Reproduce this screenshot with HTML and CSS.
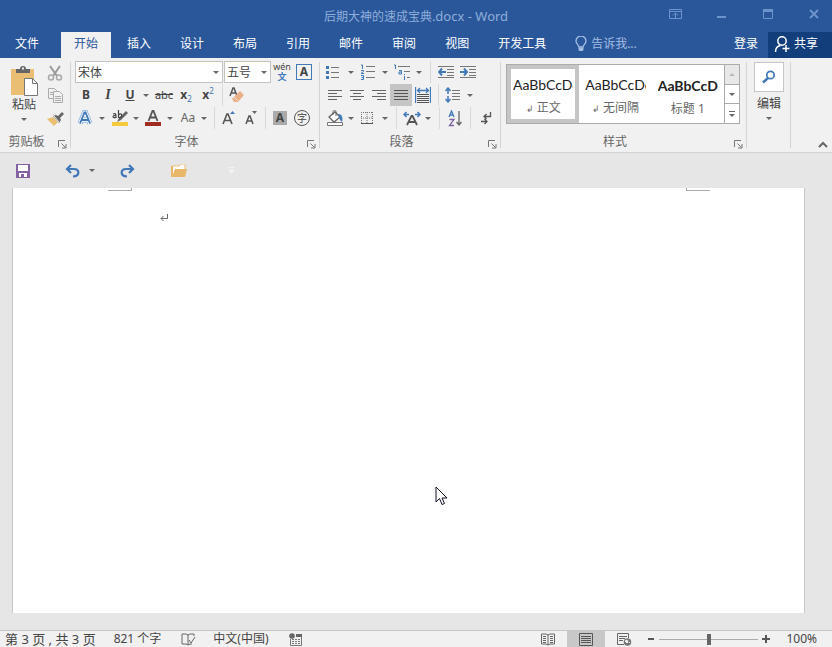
FILE: index.html
```html
<!DOCTYPE html>
<html lang="zh-CN">
<head>
  <meta charset="UTF-8">
  <meta name="viewport" content="width=device-width, initial-scale=1.0">
  <title>后期大神的速成宝典.docx - Word</title>
  <link rel="stylesheet" href="styles.css">
</head>
<body>
  <header class="top">
    <div class="title-bar">
      <h1>后期大神的速成宝典<span class="latin">.docx - Word</span></h1>
      <div class="window-buttons">
        <button title="功能区显示选项"><svg width="14" height="12" viewBox="0 0 14 12"><path d="M.5 1.5h12v9H.5zM.5 3.5h12M6.500 10V5M4 7.500l2.500-2.500L9 7.500" fill="none" stroke="currentColor"/></svg></button>
        <button title="最小化"><svg width="10" height="12" viewBox="0 0 10 12"><path d="M0 8h9v2H0z" fill="currentColor"/></svg></button>
        <button title="最大化"><svg width="12" height="12" viewBox="0 0 12 12"><path d="M1.500 1.500h9v9h-9z" fill="none" stroke="currentColor"/><path d="M1 1h10v3H1z" fill="currentColor"/></svg></button>
        <button title="关闭"><svg width="12" height="12" viewBox="0 0 12 12"><path d="M2 2l8 8M10 2l-8 8" stroke="currentColor" stroke-width="2"/></svg></button>
      </div>
    </div>
    <nav class="tabs">
      <button class="file">文件</button>
      <button class="active">开始</button>
      <button>插入</button>
      <button>设计</button>
      <button>布局</button>
      <button>引用</button>
      <button>邮件</button>
      <button>审阅</button>
      <button>视图</button>
      <button>开发工具</button>
      <button class="tell-me"><svg width="12" height="16" viewBox="0 0 12 16"><path d="M4 11c0-2-3-3-3-6a5 5 0 0 1 10 0c0 3-3 4-3 6z" fill="none" stroke="currentColor" stroke-width="1.300"/><path d="M3.500 11.500h5V14l-1 1h-3l-1-1z" fill="currentColor"/></svg>告诉我...</button>
      <button class="login">登录</button>
      <button class="share"><svg width="16" height="18" viewBox="0 0 16 18"><circle cx="8" cy="6" r="4.200" fill="none" stroke="currentColor" stroke-width="1.500"/><path d="M1.500 17c0-4 2-6 5-6.500M8.500 13.500h7M12 10v7" fill="none" stroke="currentColor" stroke-width="1.500"/></svg>共享</button>
    </nav>
  </header>

  <section class="ribbon">
    <div class="group clipboard">
      <div class="tools">
        <button class="paste">
          <svg width="30" height="31" viewBox="0 0 30 31"><path d="M2 4h23v26H2z" fill="#eabf74"/><path d="M7 8V4h4a3 3 0 0 1 6 0h4v4z" fill="#666"/><path d="M13 2.500h2v2h-2z" fill="#f1f1f1"/><path d="M15.500 13.500h8l5 5v12h-13z" fill="#fff" stroke="#777"/><path d="M23.500 13.500v5h5" fill="none" stroke="#777"/></svg>
          <span>粘贴</span>
          <i class="caret"></i>
        </button>
        <div class="side">
          <button title="剪切"><svg width="16" height="16" viewBox="0 0 16 16"><path d="M3 1l7 10M13 1L6 11" stroke="#999" stroke-width="2"/><circle cx="4" cy="12.500" r="2.500" fill="none" stroke="#aaa" stroke-width="1.500"/><circle cx="12" cy="12.500" r="2.500" fill="none" stroke="#aaa" stroke-width="1.500"/></svg></button>
          <button title="复制"><svg width="16" height="15" viewBox="0 0 16 15"><g fill="#f1f1f1" stroke="#aaa"><path d="M1.500.5h6l2 2v8h-8z"/><path d="M3 4.500h4M3 6.500h3"/><path d="M6.500 3.500h6l3 3v8h-9z"/><path d="M8 8.500h6M8 10.500h6M8 12.500h6"/></g></svg></button>
          <button title="格式刷"><svg width="17" height="14" viewBox="0 0 17 14"><path d="M0 7l6-2 5 5-4 4z" fill="#eabf74"/><path d="M6 4l3-1 2 1 4-4 2 2-4 4 1 2-2 3z" fill="#666"/><path d="M7 4l5 6" stroke="#f1f1f1"/></svg></button>
        </div>
      </div>
      <footer>剪贴板<button class="launcher" title="剪贴板"><svg width="9" height="9" viewBox="0 0 9 9"><path d="M.5 7V.5H7M3.500 3.500l4 4M8 4v4H4" fill="none" stroke="#777"/></svg></button></footer>
    </div>

    <div class="group font">
      <div class="row">
        <label class="combo family"><select aria-label="字体"><option>宋体</option></select><i class="caret"></i></label>
        <label class="combo size"><select aria-label="字号"><option>五号</option></select><i class="caret"></i></label>
        <button class="wen" title="拼音指南"><span>wén</span><b>文</b></button>
        <button title="字符边框"><b class="box-a">A</b></button>
      </div>
      <div class="row">
        <button title="加粗"><b>B</b></button>
        <button title="倾斜"><em>I</em></button>
        <button class="drop" title="下划线"><u>U</u><i class="caret"></i></button>
        <button title="删除线"><s>abc</s></button>
        <button class="script" title="下标"><b>x</b><sub>2</sub></button>
        <button class="script" title="上标"><b>x</b><sup>2</sup></button>
        <span class="sep"></span>
        <button title="清除格式"><svg width="16" height="16" viewBox="0 0 16 16"><path d="M1 9l3-8h1l3 8M2.500 6h4" fill="none" stroke="#555" stroke-width="1.500"/><path d="M11 4l4 4-6 7H5l-2-3z" fill="#eab088"/><path d="M5 10l4 4" stroke="#f7dcc8"/></svg></button>
      </div>
      <div class="row">
        <button class="drop" title="文本效果"><svg width="16" height="16" viewBox="0 0 16 16"><path d="M3 13.500L7.500 2.500h1l4.500 11M5 10h6" fill="none" stroke="#7fa9dc" stroke-width="5"/><path d="M3 13.500L7.500 2.500h1l4.500 11M5 10h6" fill="none" stroke="#fff" stroke-width="3.500"/><path d="M3 13.500L7.500 2.500h1l4.500 11M5 10h6" fill="none" stroke="#4178b8" stroke-width="1.800"/></svg><i class="caret"></i></button>
        <button class="drop" title="突出显示"><svg width="18" height="18" viewBox="0 0 18 18"><path d="M1 13h16v4H1z" fill="#f5cb3c"/><path d="M8 9l7-7 2 2-7 7-4 2z" fill="#666"/><path d="M2 5c3-1 3 0 3 4M5 6.500c-4-.5-4 3 0 2M7.500 1v8M7.500 6c2-2 4-1 3 1s-2 2-3 1" fill="none" stroke="#444" stroke-width="1.200"/></svg><i class="caret"></i></button>
        <button class="drop" title="字体颜色"><svg width="16" height="18" viewBox="0 0 16 18"><path d="M0 13h16v4H0z" fill="#a12c21"/><path d="M3.500 12L7.500 2h1l4 10M5 8.500h6" fill="none" stroke="#555" stroke-width="1.800"/></svg><i class="caret"></i></button>
        <button class="drop case" title="更改大小写"><span>Aa</span><i class="caret"></i></button>
        <span class="sep"></span>
        <button title="增大字号"><svg width="14" height="16" viewBox="0 0 14 16"><path d="M1 14L5 4h1l4 10M2.500 10.500h6" fill="none" stroke="#555" stroke-width="1.600"/><path d="M8 4l2.500-3L13 4z" fill="#4178b8"/></svg></button>
        <button title="减小字号"><svg width="14" height="16" viewBox="0 0 14 16"><path d="M2 14l3-8h1l3 8M3 11h5" fill="none" stroke="#555" stroke-width="1.500"/><path d="M8 1l2.500 3L13 1z" fill="#666"/></svg></button>
        <span class="sep"></span>
        <button title="字符底纹"><b class="shade-a">A</b></button>
        <button title="带圈字符"><span class="ring">字</span></button>
      </div>
      <footer>字体<button class="launcher" title="字体"><svg width="9" height="9" viewBox="0 0 9 9"><path d="M.5 7V.5H7M3.500 3.500l4 4M8 4v4H4" fill="none" stroke="#777"/></svg></button></footer>
    </div>

    <div class="group paragraph">
      <div class="row">
        <button class="drop" title="项目符号"><svg width="15" height="15" viewBox="0 0 15 15"><path d="M0 1h3v3H0zM0 6h3v3H0zM0 11h3v3H0z" fill="#4178b8"/><path d="M5 2.500h8M5 7.500h8M5 12.500h8" stroke="#777"/></svg><i class="caret"></i></button>
        <button class="drop" title="编号"><svg width="17" height="16" viewBox="0 0 17 16"><path d="M1 1h1.500v4M1 6.500h2.500v1L1 9.500h3M1 11.500h2.500v4H1M1.500 13.500h2" fill="none" stroke="#4178b8"/><path d="M6 2.500h9M6 7.500h9M6 13.500h9" stroke="#777"/></svg><i class="caret"></i></button>
        <button class="drop" title="多级列表"><svg width="17" height="16" viewBox="0 0 17 16"><path d="M0 1h1.500v4M5 6.500h2.500v3.500H5V8h2M10.500 10v1M10.500 12v4" fill="none" stroke="#4178b8"/><path d="M4 2.500h12M10 7.500h6M13 13.500h3" stroke="#777"/></svg><i class="caret"></i></button>
        <span class="sep"></span>
        <button title="减少缩进量"><svg width="17" height="14" viewBox="0 0 17 14"><path d="M0 1.500h16M9 4.500h7M9 7.500h7M9 10.500h7M0 12.500h16" stroke="#777"/><path d="M1 7h7M4 3.500L1 7l3 3.500" fill="none" stroke="#4178b8" stroke-width="2"/></svg></button>
        <button title="增加缩进量"><svg width="17" height="14" viewBox="0 0 17 14"><path d="M0 1.500h16M9 4.500h7M9 7.500h7M9 10.500h7M0 12.500h16" stroke="#777"/><path d="M0 7h7M4 3.500L7 7l-3 3.500" fill="none" stroke="#4178b8" stroke-width="2"/></svg></button>
      </div>
      <div class="row">
        <button title="左对齐"><svg width="14" height="12" viewBox="0 0 14 12"><path d="M0 1.500h14M0 4.500h9M0 7.500h14M0 10.500h9" stroke="#666"/></svg></button>
        <button title="居中"><svg width="14" height="12" viewBox="0 0 14 12"><path d="M0 1.500h14M3 4.500h8M0 7.500h14M3 10.500h8" stroke="#666"/></svg></button>
        <button title="右对齐"><svg width="14" height="12" viewBox="0 0 14 12"><path d="M0 1.500h14M5 4.500h9M0 7.500h14M5 10.500h9" stroke="#666"/></svg></button>
        <button class="on" title="两端对齐"><svg width="14" height="12" viewBox="0 0 14 12"><path d="M0 1.500h14M0 4.500h14M0 7.500h14M0 10.500h14" stroke="#555"/></svg></button>
        <button title="分散对齐"><svg width="16" height="16" viewBox="0 0 16 16"><path d="M.5 0v16M15.500 0v16M3 3.500h10M5 1L2.500 3.500 5 6M11 1l2.500 2.500L11 6" fill="none" stroke="#4178b8" stroke-width="1.300"/><path d="M2 7.500h12M2 9.500h12M2 11.500h12M2 13.500h12M2 15.500h12" stroke="#555"/></svg></button>
        <span class="sep"></span>
        <button class="drop" title="行距"><svg width="15" height="16" viewBox="0 0 15 16"><path d="M3 1v14M.5 4L3 1l2.500 3M.5 12L3 15l2.500-3" fill="none" stroke="#4178b8" stroke-width="1.500"/><path d="M3 7v2" stroke="#f1f1f1" stroke-width="2"/><path d="M7 3.500h8M7 6.500h8M7 9.500h8M7 12.500h8" stroke="#777"/></svg><i class="caret"></i></button>
      </div>
      <div class="row">
        <button class="drop" title="底纹"><svg width="18" height="17" viewBox="0 0 18 17"><path d="M1.500 12.500h15v3h-15z" fill="#fff" stroke="#777"/><path d="M3 7l6-5 5 5-6 5z" fill="#fff" stroke="#666" stroke-width="1.300"/><path d="M7 5V2c0-2 3-2 3 0v4" fill="none" stroke="#666"/><path d="M12 4c4 0 5 3 4 8l-2-2z" fill="#4178b8"/></svg><i class="caret"></i></button>
        <button class="drop" title="边框"><svg width="16" height="14" viewBox="0 0 16 14"><path d="M1.500 1v12M7 1v12M12.500 1v12M1 1.500h12M1 7h12" fill="none" stroke="#777" stroke-dasharray="1 1"/><path d="M1 12.500h12" stroke="#555"/></svg><i class="caret"></i></button>
        <span class="sep"></span>
        <button class="drop" title="中文版式"><svg width="18" height="15" viewBox="0 0 18 15"><path d="M4 14L8.500 5h1L14 14M6 11h6" fill="none" stroke="#555" stroke-width="1.800"/><path d="M1 3.500h5M3.500 1L1 3.500 3.500 6M12 3.500h5M14.500 1L17 3.500 14.500 6" fill="none" stroke="#4178b8" stroke-width="1.500"/></svg><i class="caret"></i></button>
        <span class="sep"></span>
        <button title="排序"><svg width="15" height="17" viewBox="0 0 15 17"><path d="M1 7l2.500-6L6 7M2 5h3" fill="none" stroke="#4178b8" stroke-width="1.300"/><path d="M1.500 9.500H6L1.500 15.500H6" fill="none" stroke="#8064a2" stroke-width="1.300"/><path d="M11 1v14M8.500 12l2.500 3 2.500-3" fill="none" stroke="#666" stroke-width="1.300"/></svg></button>
        <span class="sep"></span>
        <button title="显示编辑标记"><svg width="12" height="14" viewBox="0 0 12 14"><path d="M10.500 1v4.500H4M6.500 3L4 5.500 6.500 8M7 10.500H1M4.500 8L7 10.500 4.500 13" fill="none" stroke="#555" stroke-width="1.300"/></svg></button>
      </div>
      <footer>段落<button class="launcher" title="段落"><svg width="9" height="9" viewBox="0 0 9 9"><path d="M.5 7V.5H7M3.500 3.500l4 4M8 4v4H4" fill="none" stroke="#777"/></svg></button></footer>
    </div>

    <div class="group styles">
      <div class="gallery">
        <button class="style selected"><span class="sample">AaBbCcDd</span><span><small>↲</small> 正文</span></button>
        <button class="style"><span class="sample">AaBbCcDd</span><span><small>↲</small> 无间隔</span></button>
        <button class="style"><span class="sample heading">AaBbCcDd</span><span>标题 1</span></button>
        <div class="scroller">
          <button class="off" title="上一行"><i class="caret up"></i></button>
          <button title="下一行"><i class="caret"></i></button>
          <button title="其他"><i class="line"></i><i class="caret"></i></button>
        </div>
      </div>
      <footer>样式<button class="launcher" title="样式"><svg width="9" height="9" viewBox="0 0 9 9"><path d="M.5 7V.5H7M3.500 3.500l4 4M8 4v4H4" fill="none" stroke="#777"/></svg></button></footer>
    </div>

    <div class="group editing">
      <button class="edit">
        <span class="frame"><svg width="14" height="14" viewBox="0 0 14 14"><circle cx="8.500" cy="5" r="3.700" fill="none" stroke="#4178b8" stroke-width="1.700"/><path d="M6 8l-5 4.500" stroke="#4178b8" stroke-width="2.500"/></svg></span>
        <span>编辑</span>
        <i class="caret"></i>
      </button>
    </div>
    <button class="collapse" title="折叠功能区"><svg width="10" height="7" viewBox="0 0 10 7"><path d="M1 6l4-4 4 4" fill="none" stroke="#666" stroke-width="2"/></svg></button>
  </section>

  <div class="quick-access">
    <button title="保存"><svg width="14" height="14" viewBox="0 0 14 14"><path d="M0 0h14v14H0z" fill="#8461a5"/><path d="M2 1h10v6H2zM3 9h8v4H3z" fill="#fff"/><path d="M5 10h3v3H5z" fill="#8461a5"/></svg></button>
    <button class="undo" title="撤消"><svg width="16" height="14" viewBox="0 0 16 14"><path d="M2 5h7c6 0 6 7-1 7.500M6 1L2 5l4 4" fill="none" stroke="#4178b8" stroke-width="2.200"/></svg><i class="caret"></i></button>
    <button class="redo" title="恢复"><svg width="16" height="14" viewBox="0 0 16 14"><path d="M14 5H7c-6 0-6 7 1 7.500M10 1l4 4-4 4" fill="none" stroke="#4178b8" stroke-width="2.200"/></svg></button>
    <button class="open" title="打开"><svg width="17" height="14" viewBox="0 0 17 14"><path d="M1 2h7l2-2h4v11H1z" fill="#fff" stroke="#eabf74"/><path d="M4 5h12l-2 8H1z" fill="#e8b868"/><path d="M0 2h2v11H0z" fill="#e8b868"/></svg></button>
    <button class="customize" title="自定义快速访问工具栏"><svg width="7" height="7" viewBox="0 0 7 7"><path d="M1 .5h5M1 3h5L3.500 6z" fill="#f3f3f3" stroke="#f3f3f3"/></svg></button>
  </div>

  <main class="workspace">
    <article class="page">
      <div class="crop-marks"><span class="left"></span><span class="right"></span></div>
      <p><svg width="8" height="8" viewBox="0 0 8 8"><path d="M7.500 0v4.500H1M3.500 2L1 4.500 3.500 7" fill="none" stroke="#666"/></svg></p>
      <svg class="pointer" width="13" height="20" viewBox="0 0 13 20"><path d="M1 1v15l3.500-3.500L7 18.500l2.500-1L7 12h5z" fill="#fff" stroke="#112"/></svg>
    </article>
  </main>

  <footer class="status">
    <span class="pages">第 3 页 , 共 3 页</span>
    <span class="words">821 个字</span>
    <button class="proof" title="校对"><svg width="15" height="13" viewBox="0 0 15 13"><path d="M7 2L5 1H1v10h4l2 1V2l2-1h4v2M7 12l2-1h2M8 7l2 3 4-6" fill="none" stroke="#666"/></svg></button>
    <span class="lang">中文(中国)</span>
    <button title="宏"><svg width="13" height="13" viewBox="0 0 13 13"><path d="M1.500 6v6.500h11v-9" fill="none" stroke="#777"/><path d="M7 1h6v3H7z" fill="#666"/><circle cx="3" cy="3" r="2.800" fill="#666"/><path d="M3 6.500h8M3 8.500h8M3 10.500h8" stroke="#777" stroke-dasharray="2 1"/></svg></button>
    <div class="views">
      <button title="阅读视图"><svg width="14" height="13" viewBox="0 0 14 13"><path d="M7 2L5 1H.5v10H5l2 1 2-1h4.500V1H9L7 2zv10M2 3.500h3M2 5.500h3M2 7.500h3M2 9.500h3M9 3.500h3M9 5.500h3M9 7.500h3M9 9.500h3" fill="none" stroke="#666"/></svg></button>
      <button class="on" title="页面视图"><svg width="14" height="13" viewBox="0 0 14 13"><path d="M.5.500h13v12H.5zM2 3.500h10M2 5.500h10M2 7.500h10M2 9.500h10" fill="none" stroke="#555"/></svg></button>
      <button title="Web 版式视图"><svg width="15" height="13" viewBox="0 0 15 13"><path d="M7 11.500H.5V.5h11V5M2 3.500h8M2 5.500h6M2 7.500h4" fill="none" stroke="#666"/><circle cx="10.500" cy="9" r="3.800" fill="#777"/><path d="M8 8l2-1 1 2-1 1zM12 10l1-1" fill="#fff" stroke="#eee"/></svg></button>
    </div>
    <button class="zoom-step" title="缩小"><svg width="8" height="8" viewBox="0 0 8 8"><path d="M1 3h6v2H1z" fill="#555"/></svg></button>
    <input type="range" min="0" max="100" value="50" aria-label="缩放">
    <button class="zoom-step" title="放大"><svg width="8" height="8" viewBox="0 0 8 8"><path d="M0 3h3V0h2v3h3v2H5v3H3V5H0z" fill="#555"/></svg></button>
    <span class="percent">100%</span>
  </footer>
</body>
</html>
```
FILE: styles.css
```css
* {
  box-sizing: border-box;
}

body {
  margin: 0;
  min-height: 100vh;
  display: flex;
  flex-direction: column;
  font: 12px/16px "Noto Sans", "Noto Sans CJK SC", sans-serif;
  color: #444;
  background: #e6e6e6;
}

button {
  display: flex;
  align-items: center;
  justify-content: center;
  padding: 0;
  border: 0;
  background: none;
  font: inherit;
  color: inherit;
  white-space: nowrap;
}

svg {
  display: block;
  flex: none;
}

.caret {
  flex: none;
  width: 0;
  height: 0;
  border: 3px solid transparent;
  border-top-color: #666;
  border-bottom: 0;
}

.caret.up {
  border-top: 0;
  border-bottom: 3px solid #bbb;
}

/* title bar and tabs */
.top {
  background: #2a579a;
  color: #fff;
}

.title-bar {
  position: relative;
  height: 32px;
  display: flex;
  align-items: center;
  justify-content: center;
}

.title-bar h1 {
  margin: 0;
  font-size: 12px;
  font-weight: normal;
  color: #8eaedb;
}

.title-bar .latin {
  font-size: 13px;
}

.window-buttons {
  position: absolute;
  top: 0;
  right: 0;
  display: flex;
  color: #6c93cb;
}

.window-buttons button {
  width: 46px;
  height: 28px;
}

.tabs {
  display: flex;
  height: 26px;
  gap: 3px;
  padding-left: 2px;
}

.tabs button {
  padding: 0 13px 2px;
}

.tabs .file {
  margin-right: 6px;
}

.tabs .active {
  background: #f1f1f1;
  color: #2a579a;
}

.tabs .tell-me {
  gap: 4px;
  color: #a3bde3;
}

.tabs .login {
  margin-left: auto;
  padding: 0 7px 2px;
}

.tabs .share {
  gap: 4px;
  padding: 0 14px 2px 6px;
  background: #123f7b;
}

.window-buttons button:last-child {
  width: 36px;
}

.window-buttons button:nth-last-child(2) {
  margin-right: 5px;
}

/* ribbon */
.ribbon {
  display: flex;
  height: 95px;
  background: #f1f1f1;
  border-bottom: 1px solid #d2d2d2;
}

.group {
  position: relative;
  display: flex;
  flex-direction: column;
  padding: 3px 4px 0;
}

.group::after {
  content: "";
  position: absolute;
  top: 4px;
  right: 0;
  bottom: 4px;
  width: 1px;
  background: #d4d4d4;
}

.group > footer {
  position: relative;
  margin-top: auto;
  height: 18px;
  padding-right: 18px;
  text-align: center;
  color: #666;
}

.launcher {
  position: absolute;
  right: 0;
  top: 6px;
}

.clipboard {
  width: 71px;
}

.clipboard .tools {
  display: flex;
  justify-content: space-between;
}

.paste {
  flex-direction: column;
  align-self: flex-start;
  width: 38px;
  padding: 4px 0 0 2px;
}

.paste span {
  margin: 1px 0 5px;
}

.side button {
  width: 20px;
  height: 23px;
}

.side {
  margin-right: 2px;
}

.font {
  width: 249px;
}

.paragraph {
  width: 181px;
}

.styles {
  width: 246px;
}

.editing {
  width: 44px;
}

.row {
  display: flex;
  align-items: center;
  height: 22px;
  margin-bottom: 1px;
}

.row button {
  width: 22px;
  height: 22px;
}

.row .drop {
  width: 30px;
  margin-right: 4px;
}

.row .drop > span,
.row .drop > u {
  width: 22px;
  text-align: center;
}

.row .drop {
  justify-content: space-between;
}

.row .drop > svg {
  margin: 0 2px;
}

.row .on {
  background: #c5c5c5;
}

.sep {
  width: 1px;
  height: 22px;
  margin: 0 3px;
  background: #dadada;
}

.paragraph .sep {
  margin: 0 4px;
}

.combo {
  position: relative;
  display: flex;
  height: 22px;
}

.combo select {
  width: 100%;
  padding: 1px 2px 0;
  border: 1px solid #c3c3c3;
  border-radius: 0;
  appearance: none;
  background: #fff;
  font: inherit;
  color: #444;
}

.combo .caret {
  position: absolute;
  right: 4px;
  top: 10px;
}

.family {
  width: 148px;
  margin-right: 1px;
}

.size {
  width: 47px;
}

.row .wen {
  flex-direction: column;
  font-size: 9px;
  line-height: 8px;
  gap: 2px;
}

.wen b {
  color: #4178b8;
}

.box-a {
  width: 16px;
  height: 16px;
  border: 1px solid #4178b8;
  line-height: 14px;
}

.shade-a {
  width: 14px;
  height: 14px;
  background: #aaa;
  line-height: 14px;
}

.ring {
  width: 16px;
  height: 16px;
  border: 1px solid #555;
  border-radius: 50%;
  font-size: 10px;
  line-height: 14px;
}

.row s {
  font-size: 11px;
}

.row em,
.row u {
  font-weight: bold;
}

.row em {
  font-family: "Liberation Serif", serif;
  font-size: 14px;
}

.script sub,
.script sup {
  font-size: 8px;
  line-height: 8px;
  color: #4178b8;
}

.script sub {
  align-self: flex-end;
  margin-bottom: 3px;
}

.script sup {
  align-self: flex-start;
  margin-top: 3px;
}

.case {
  color: #666;
}

/* style gallery */
.gallery {
  display: flex;
  height: 60px;
  margin: 3px 3px 0 1px;
  border: 1px solid #ababab;
  background: #fff;
}

.style {
  flex: 1;
  flex-direction: column;
  min-width: 0;
  padding: 6px 6px 0;
  color: #666;
}

.style.selected {
  padding: 6px 2px 0;
  border: 4px solid #c5c5c5;
}

.style .sample {
  width: 100%;
  margin-bottom: 7px;
  overflow: hidden;
  text-align: left;
  font-family: Lato, sans-serif;
  font-size: 14px;
  color: #222;
}

.style .heading {
  font-weight: bold;
}

.style small {
  font-size: 9px;
}

.scroller {
  display: flex;
  flex-direction: column;
  width: 15px;
  border-left: 1px solid #ababab;
}

.scroller button {
  flex: 1;
  flex-direction: column;
  gap: 2px;
}

.scroller button + button {
  border-top: 1px solid #ababab;
}

.scroller .off {
  background: #e8e8e8;
}

.scroller .line {
  width: 6px;
  height: 1px;
  background: #666;
}

.edit {
  flex-direction: column;
}

.edit .frame {
  display: flex;
  align-items: center;
  justify-content: center;
  width: 30px;
  height: 30px;
  margin: 1px 0 4px;
  border: 1px solid #c6c6c6;
  background: #fff;
}

.edit .caret {
  margin-top: 5px;
}

.collapse {
  align-self: flex-end;
  margin: 0 4px 4px auto;
}

/* quick access toolbar */
.quick-access {
  display: flex;
  align-items: center;
  height: 35px;
  padding-left: 16px;
}

.quick-access .undo {
  gap: 8px;
  margin-left: 35px;
}

.quick-access .redo {
  margin-left: 24px;
}

.quick-access .open {
  margin-left: 36px;
}

.quick-access .customize {
  margin-left: 40px;
}

/* document */
.workspace {
  flex: 1;
  display: flex;
  padding: 0 27px 17px 12px;
}

.page {
  position: relative;
  flex: 1;
  background: #fff;
  border: solid #c6c6c6;
  border-width: 0 1px;
}

.crop-marks {
  display: flex;
  justify-content: space-between;
  padding: 0 94px 0 95px;
}

.crop-marks span {
  width: 24px;
  height: 3px;
  border: solid #aaa;
  border-width: 0 1px 1px 0;
}

.crop-marks .right {
  border-width: 0 0 1px 1px;
}

.page p {
  margin: 23px 147px;
}

.pointer {
  position: absolute;
  left: 422px;
  top: 298px;
}

/* status bar */
.status {
  display: flex;
  align-items: center;
  height: 17px;
  padding: 0 15px 0 5px;
  border-top: 1px solid #c6c6c6;
  background: #f1f1f1;
  white-space: nowrap;
}

.pages {
  font-size: 13px;
}

.words {
  margin-left: 18px;
}

.proof {
  margin: 0 17px 0 20px;
}

.lang {
  margin-right: 20px;
}

.views {
  display: flex;
  align-self: stretch;
  margin-left: auto;
}

.views button {
  width: 38px;
}

.views .on {
  background: #c8c8c8;
}

.zoom-step {
  width: 16px;
}

.status input {
  width: 99px;
  height: 12px;
  margin: 0;
  appearance: none;
  background: linear-gradient(#aaa, #aaa) center / 100% 1px no-repeat;
}

.status input::-webkit-slider-thumb {
  appearance: none;
  width: 4px;
  height: 11px;
  background: #666;
}

.percent {
  margin-left: 12px;
}
```
